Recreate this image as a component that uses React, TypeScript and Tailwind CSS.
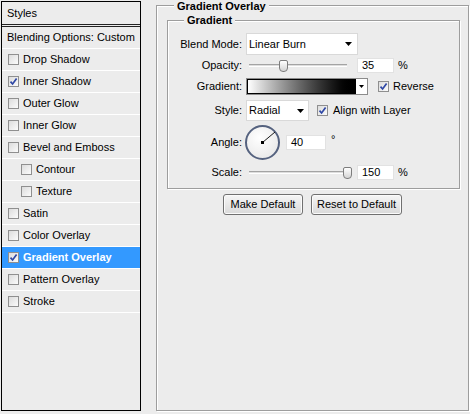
import React from "react";

const layers = [
  { name: "Drop Shadow", checked: false },
  { name: "Inner Shadow", checked: true },
  { name: "Outer Glow", checked: false },
  { name: "Inner Glow", checked: false },
  { name: "Bevel and Emboss", checked: false },
  { name: "Contour", checked: false, indent: true },
  { name: "Texture", checked: false, indent: true },
  { name: "Satin", checked: false },
  { name: "Color Overlay", checked: false },
  { name: "Gradient Overlay", checked: true, active: true },
  { name: "Pattern Overlay", checked: false },
  { name: "Stroke", checked: false },
];

function Check({ on }: { on: boolean }) {
  return (
    <div className="w-[11px] h-[11px] shrink-0 border border-[#8f8f8f] bg-gradient-to-br from-[#dcdcdc] to-[#fbfbfb] flex items-center justify-center">
      {on && (
        <svg width="9" height="9" viewBox="0 0 9 9">
          <path d="M1.5 4.6 L3.6 7 L7.6 1.6" fill="none" stroke="#2e47a5" strokeWidth="1.7" />
        </svg>
      )}
    </div>
  );
}

function Arrow({ w = 7, h = 4 }: { w?: number; h?: number }) {
  return (
    <svg width={w} height={h} viewBox={`0 0 ${w} ${h}`}>
      <path d={`M0 0H${w}L${w / 2} ${h}Z`} fill="#000" />
    </svg>
  );
}

function Slider({ pos }: { pos: number }) {
  return (
    <div className="relative w-[98px] h-[15px] ml-[3px]">
      <div className="absolute left-0 right-0 top-[6px] h-[3px] border-t border-[#a4a4a4] border-b border-b-white bg-[#dedede]" />
      <div
        className="absolute top-[2px] w-[9px] h-[12px] border border-[#7d7d7d] rounded-b-[4px] rounded-t-[2px] bg-gradient-to-b from-white to-[#d4d4d4]"
        style={{ left: pos }}
      />
    </div>
  );
}

function Field({ value, w }: { value: string; w: string }) {
  return <div className={`${w} h-[15px] bg-white border border-[#e2e2e2] flex items-center pl-[4px]`}>{value}</div>;
}

export default function App() {
  return (
    <div className="w-[470px] h-[414px] bg-[#ececec] flex font-['Liberation_Sans',Arial,sans-serif] text-[11px] text-black leading-[13px]">
      <div className="ml-[1px] mt-[1px] w-[140px] h-[410px] border border-black flex flex-col">
        <div className="h-[22px] flex items-center pl-[5px]">Styles</div>
        <div className="h-[3px] border-y border-[#222]" />
        <div className="h-[21px] flex items-center pl-[5px]">Blending Options: Custom</div>
        <div className="h-px bg-white" />
        {layers.map((l) => (
          <React.Fragment key={l.name}>
            <div
              className={`h-[21px] flex items-center gap-[4px] ${l.indent ? "pl-[19px]" : "pl-[6px]"} ${
                l.active ? "bg-[#3399ff] text-white font-bold" : ""
              }`}
            >
              <Check on={l.checked} />
              <span>{l.name}</span>
            </div>
            <div className="h-px bg-white" />
          </React.Fragment>
        ))}
      </div>

      <div className="relative ml-[15px] mt-[5px] w-[313px] h-[406px] border border-[#9d9d9d] shadow-[inset_1px_1px_0_#fff,1px_1px_0_#fff]">
        <div className="absolute -top-[6px] left-[17px] px-[3px] bg-[#ececec] font-bold">Gradient Overlay</div>

        <div className="relative ml-[10px] mt-[14px] w-[293px] border border-[#9d9d9d] shadow-[inset_1px_1px_0_#fff,1px_1px_0_#fff] pb-[8px]">
          <div className="absolute -top-[7px] left-[16px] px-[3px] bg-[#ececec] font-bold">Gradient</div>

          <div className="flex items-center mt-[12px] h-[22px]">
            <div className="w-[74px] text-right">Blend Mode:</div>
            <div className="ml-[4px] h-[22px] w-[112px] bg-white border border-[#d9d9d9] flex items-center pl-[2px]">
              <span>Linear Burn</span>
              <span className="ml-auto mr-[5px] flex">
                <Arrow />
              </span>
            </div>
          </div>

          <div className="flex items-center mt-[3px] h-[15px]">
            <div className="w-[74px] text-right">Opacity:</div>
            <div className="ml-[4px] flex items-center">
              <Slider pos={30} />
              <div className="ml-[10px]">
                <Field value="35" w="w-[37px]" />
              </div>
              <span className="ml-[4px]">%</span>
            </div>
          </div>

          <div className="flex items-center mt-[5px] h-[17px]">
            <div className="w-[74px] text-right">Gradient:</div>
            <div className="ml-[4px] w-[122px] h-[17px] border border-[#8c8c8c] bg-white flex">
              <div className="flex-1 border border-black bg-gradient-to-r from-white to-black" />
              <div className="w-[11px] flex items-center justify-center">
                <Arrow w={5} h={3} />
              </div>
            </div>
            <div className="ml-[10px] flex items-center gap-[4px]">
              <Check on />
              <span>Reverse</span>
            </div>
          </div>

          <div className="flex items-center mt-[5px] h-[21px]">
            <div className="w-[74px] text-right">Style:</div>
            <div className="ml-[4px] h-[21px] w-[63px] bg-white border border-[#d9d9d9] flex items-center pl-[2px]">
              <span>Radial</span>
              <span className="ml-auto mr-[4px] flex">
                <Arrow />
              </span>
            </div>
            <div className="ml-[8px] flex items-center gap-[5px]">
              <Check on />
              <span>Align with Layer</span>
            </div>
          </div>

          <div className="flex items-center mt-[3px] h-[36px]">
            <div className="w-[74px] text-right">Angle:</div>
            <div className="ml-[3px] relative w-[35px] h-[35px] rounded-full border-2 border-[#55627f] bg-[radial-gradient(circle_at_40%_35%,#ffffff,#e4e4e4)]">
              <svg className="absolute inset-0" width="31" height="31" viewBox="0 0 31 31">
                <line x1="15.5" y1="15.5" x2="28" y2="5" stroke="#000" strokeWidth="0.9" />
                <rect x="14" y="14" width="3" height="3" fill="#000" />
              </svg>
            </div>
            <div className="ml-[6px]">
              <Field value="40" w="w-[40px]" />
            </div>
            <span className="ml-[5px] self-start mt-[9px]">°</span>
          </div>

          <div className="flex items-center mt-[5px] h-[15px]">
            <div className="w-[74px] text-right">Scale:</div>
            <div className="ml-[4px] flex items-center">
              <Slider pos={94} />
              <div className="ml-[10px]">
                <Field value="150" w="w-[37px]" />
              </div>
              <span className="ml-[4px]">%</span>
            </div>
          </div>
        </div>

        <div className="flex justify-center gap-[8px] mt-[5px]">
          <button className="w-[80px] h-[21px] border border-[#707070] rounded-[3px] bg-gradient-to-b from-[#f6f6f6] to-[#d9d9d9] shadow-[inset_0_0_0_1px_#fbfbfb]">
            Make Default
          </button>
          <button className="w-[91px] h-[21px] border border-[#707070] rounded-[3px] bg-gradient-to-b from-[#f6f6f6] to-[#d9d9d9] shadow-[inset_0_0_0_1px_#fbfbfb]">
            Reset to Default
          </button>
        </div>
      </div>
    </div>
  );
}
